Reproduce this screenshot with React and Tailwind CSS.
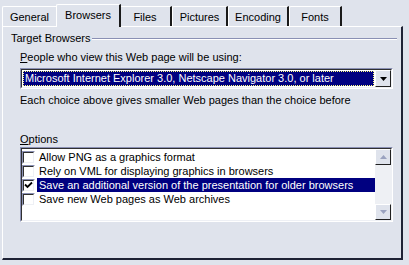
import React from 'react';

const tabs = [
  { label: 'General', w: 'w-[56px]' },
  { label: 'Browsers', w: 'w-[65px]', active: true },
  { label: 'Files', w: 'w-[53px]' },
  { label: 'Pictures', w: 'w-[56px]' },
  { label: 'Encoding', w: 'w-[61px]' },
  { label: 'Fonts', w: 'w-[53px]' },
];

const options = [
  { label: 'Allow PNG as a graphics format', checked: false },
  { label: 'Rely on VML for displaying graphics in browsers', checked: false },
  { label: 'Save an additional version of the presentation for older browsers', checked: true, selected: true },
  { label: 'Save new Web pages as Web archives', checked: false },
];

const Checkbox = ({ checked }) => (
  <div className="w-[13px] h-[13px] shrink-0 border border-t-[#8a90b4] border-l-[#8a90b4] border-b-white border-r-white">
    <div className="w-full h-full bg-white border border-t-[#303030] border-l-[#303030] border-b-[#eef0f5] border-r-[#eef0f5] flex items-center justify-center">
      {checked && (
        <svg width="9" height="9" viewBox="0 0 9 9">
          <path d="M1 3.5 L3.5 6 L8 1.5" fill="none" stroke="#000" strokeWidth="1.8" />
        </svg>
      )}
    </div>
  </div>
);

const ScrollButton = ({ up }) => (
  <div className="w-[16px] h-[16px] bg-[#dfe3ec] border border-t-white border-l-white border-b-[#202020] border-r-[#202020] flex items-center justify-center">
    <svg width="7" height="4" viewBox="0 0 7 4">
      {up ? <path d="M0 4 L3.5 0 L7 4 Z" fill="#9aa2bf" /> : <path d="M0 0 L7 0 L3.5 4 Z" fill="#9aa2bf" />}
    </svg>
  </div>
);

const App = () => {
  return (
    <div className="w-[409px] h-[265px] bg-[#dfe3ec] overflow-hidden text-[11px] leading-[13px] text-black font-['Liberation_Sans',Arial,sans-serif]">
      {/* Tabs */}
      <div className="flex items-end h-[26px] pl-[2px]">
        {tabs.map((t) =>
          t.active ? (
            <div
              key={t.label}
              className={`${t.w} h-[23px] -mx-[2px] -mb-[1px] relative z-10 bg-[#dfe3ec] border-t border-l border-t-white border-l-white border-r-2 border-r-[#1a1a1a] rounded-tl-[2px] flex items-center justify-center pb-[2px]`}
            >
              {t.label}
            </div>
          ) : (
            <div
              key={t.label}
              className={`${t.w} h-[20px] border-t border-l border-t-white border-l-white border-r-2 border-r-[#1a1a1a] rounded-tl-[2px] flex items-center justify-center pt-[1px]`}
            >
              {t.label}
            </div>
          )
        )}
      </div>

      {/* Panel */}
      <div className="mx-[2px] w-[401px] h-[234px] border-t border-l border-t-white border-l-white border-r-2 border-b-2 border-r-[#1e2235] border-b-[#1e2235] flex flex-col">
        {/* Group header */}
        <div className="flex items-center mt-[5px] pl-[8px] pr-[4px] h-[13px]">
          <span>Target Browsers</span>
          <div className="flex-1 ml-[2px] h-[2px] border-t border-t-[#8a90b4] border-b border-b-white" />
        </div>

        <div className="mt-[6px] pl-[17px] h-[13px]">
          <u>P</u>eople who view this Web page will be using:
        </div>

        {/* Select */}
        <div className="mt-[4px] ml-[17px] w-[373px] h-[21px] border border-t-[#8a90b4] border-l-[#8a90b4] border-b-white border-r-white">
          <div className="w-full h-full bg-white border border-t-[#303030] border-l-[#303030] border-b-[#eef0f5] border-r-[#eef0f5] flex">
            <div className="flex-1 m-[1px] bg-[#000080] border border-dotted border-[#ffff80] text-white flex items-center pl-[1px] whitespace-nowrap overflow-hidden">
              Microsoft Internet Explorer 3.0, Netscape Navigator 3.0, or later
            </div>
            <div className="w-[16px] h-[17px] bg-[#dfe3ec] border border-t-white border-l-white border-b-[#202020] border-r-[#202020] flex items-center justify-center">
              <svg width="7" height="4" viewBox="0 0 7 4">
                <path d="M0 0 L7 0 L3.5 4 Z" fill="#000" />
              </svg>
            </div>
          </div>
        </div>

        <div className="mt-[5px] pl-[17px] h-[13px]">
          Each choice above gives smaller Web pages than the choice before
        </div>

        <div className="mt-[26px] pl-[17px] h-[13px]">
          <u>O</u>ptions
        </div>

        {/* List */}
        <div className="mt-[1px] ml-[17px] w-[373px] h-[75px] border border-t-[#8a90b4] border-l-[#8a90b4] border-b-white border-r-white">
          <div className="w-full h-full bg-white border border-t-[#303030] border-l-[#303030] border-b-[#eef0f5] border-r-[#eef0f5] flex">
            <div className="flex-1 flex flex-col pt-[1px]">
              {options.map((o) => (
                <div key={o.label} className="flex items-center h-[14px]">
                  <Checkbox checked={o.checked} />
                  <div
                    className={`flex-1 ml-[2px] h-[14px] pl-[2px] flex items-center whitespace-nowrap ${
                      o.selected ? 'bg-[#000080] text-white' : ''
                    }`}
                  >
                    {o.label}
                  </div>
                </div>
              ))}
            </div>
            <div className="w-[16px] flex flex-col bg-[#eef0f4]">
              <ScrollButton up />
              <div className="flex-1" />
              <ScrollButton />
            </div>
          </div>
        </div>
      </div>
    </div>
  );
};

export default App;
